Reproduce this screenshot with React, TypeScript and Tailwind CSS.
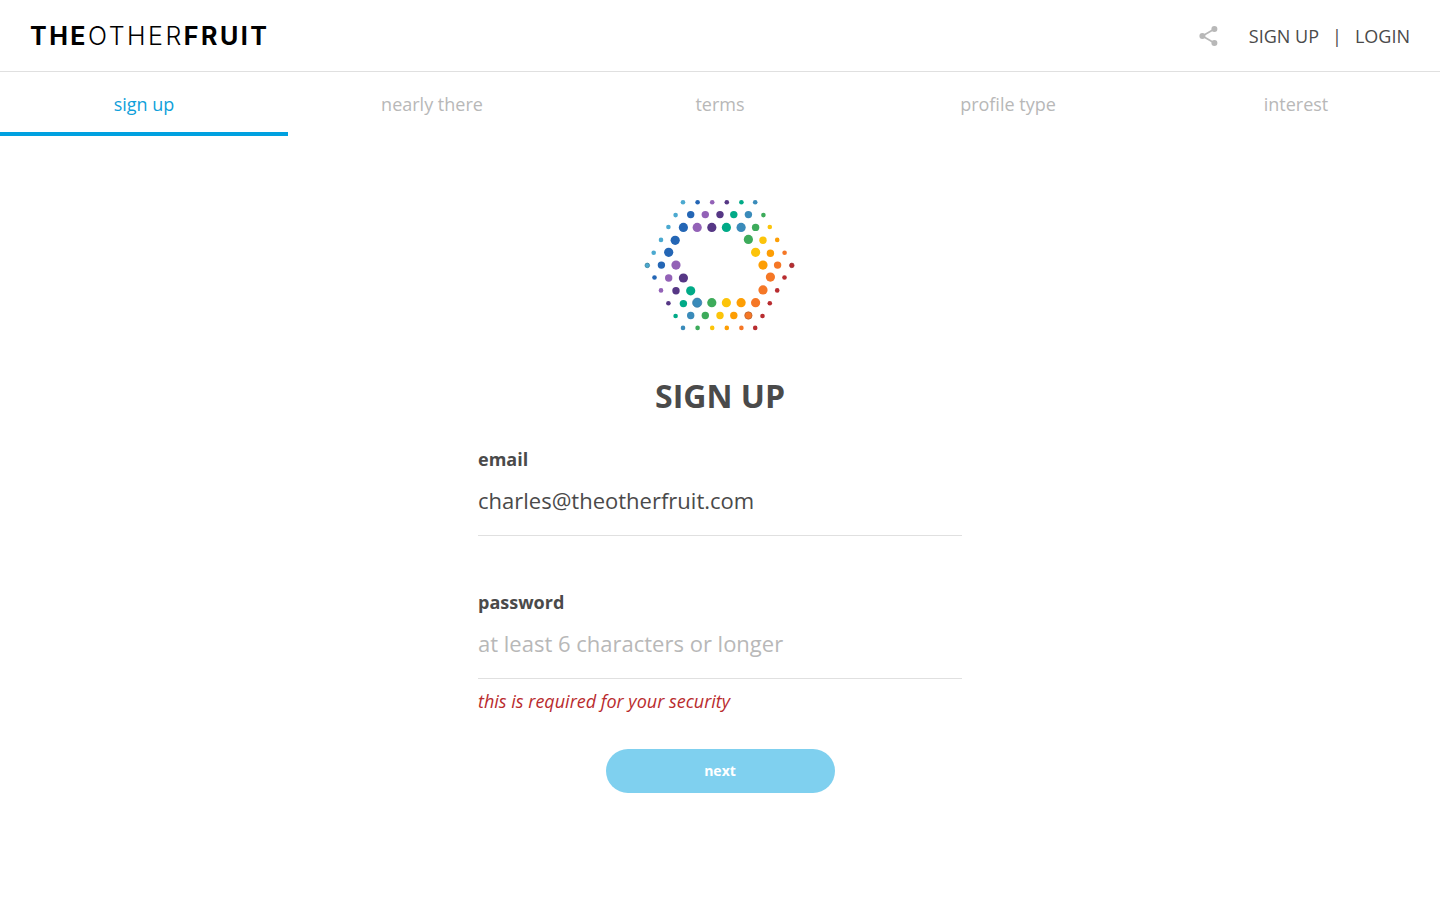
import React, { useState } from 'react';

const SKY = '#4ba9d0';
const BLUE = '#2466b5';
const VIOLET = '#9362b7';
const PLUM = '#563785';
const TEAL = '#00aa87';
const STEEL = '#3a8bba';
const GREEN = '#3dab5b';
const YELLOW = '#fcc40a';
const AMBER = '#fd9e04';
const ORANGE = '#f57726';
const RED = '#b82c30';

const S = 2.3;
const M = 3.7;
const L = 4.6;

type Dot = [x: number, y: number, r: number, fill: string, stroke?: string];

const DOTS: Dot[] = [
  [43, 10.2, S, SKY], [57.6, 10.2, S, BLUE], [72.2, 10.2, S, VIOLET], [86.8, 10.2, S, PLUM], [101.4, 10.2, S, TEAL], [115.2, 10.2, S, STEEL],
  [35.6, 23.1, S, SKY], [50.7, 22.6, M, BLUE], [65.3, 22.6, M, VIOLET], [80, 22.6, M, PLUM], [93.8, 22.6, M, TEAL], [108.4, 22.6, M, STEEL], [123.4, 23.1, S, GREEN],
  [28.4, 35, S, SKY], [43.4, 35.4, L, BLUE], [57.2, 35.4, L, VIOLET], [71.8, 35.4, L, PLUM], [86.4, 35.4, L, TEAL], [101.1, 35.4, L, STEEL], [115.6, 35.4, M, GREEN], [129.8, 35, S, YELLOW],
  [21, 47.9, S, SKY], [35.2, 48.3, L, BLUE], [108.4, 47.4, L, GREEN], [123, 48.3, M, YELLOW], [137.2, 47.9, S, AMBER],
  [13.7, 60.7, S, SKY], [28.7, 60.3, L, BLUE], [115.6, 60.3, L, YELLOW], [130.4, 61.2, M, AMBER], [144.6, 60.7, S, ORANGE],
  [7.3, 73.4, S, SKY, '#2f7b96'], [21.4, 73.1, M, BLUE], [36, 73.1, L, VIOLET], [123, 73.1, L, AMBER], [137.6, 73.1, M, ORANGE], [151.8, 73.4, S, RED, '#932d31'],
  [14.5, 85.5, S, BLUE], [28.7, 86, M, VIOLET], [43.4, 86, L, PLUM], [130.4, 85.1, L, ORANGE], [144.5, 85.5, S, RED],
  [21, 98.4, S, VIOLET], [36, 98.8, M, PLUM], [50.7, 98.8, L, TEAL], [123, 97.9, L, ORANGE], [137.2, 98.4, S, RED],
  [28.4, 111.2, S, PLUM], [43.4, 111.6, M, TEAL], [57.2, 110.7, L, STEEL, '#3377a0'], [71.8, 110.7, L, GREEN], [86.4, 110.7, L, YELLOW], [101.1, 110.7, L, AMBER], [115.6, 110.7, L, ORANGE], [129.8, 111.2, S, RED],
  [35.6, 124, S, TEAL], [50.7, 123.5, M, STEEL], [65.3, 123.5, M, GREEN], [80, 123.5, M, YELLOW], [93.8, 123.5, M, AMBER], [108.4, 123.5, M, ORANGE, '#b5602c'], [122.5, 124, S, RED],
  [43, 135.9, S, STEEL], [57.6, 135.9, S, GREEN], [72.2, 135.9, S, YELLOW], [86.8, 135.9, S, AMBER], [101.4, 135.9, S, ORANGE], [115.2, 135.9, S, RED],
];

const STEPS = ['sign up', 'nearly there', 'terms', 'profile type', 'interest'];

function DotEmblem() {
  return (
    <svg viewBox="0 0 160 146" className="h-[146px] w-40" aria-hidden="true">
      {DOTS.map(([x, y, r, fill, stroke]) => (
        <circle key={`${x}-${y}`} cx={x} cy={y} r={r} fill={fill} stroke={stroke} strokeWidth={stroke ? 0.7 : undefined} />
      ))}
    </svg>
  );
}

function ShareIcon() {
  return (
    <svg viewBox="0 0 20 20" className="size-5" fill="#b8b8b8" stroke="#b8b8b8" aria-hidden="true">
      <path d="M15.4 3 3.4 10l12 7" fill="none" strokeWidth="1.7" />
      <circle cx="15.4" cy="3" r="3" stroke="none" />
      <circle cx="3.4" cy="10" r="3" stroke="none" />
      <circle cx="15.4" cy="17" r="3" stroke="none" />
    </svg>
  );
}

const inputClass =
  'mt-2 h-[55px] w-full border-b border-[#e0e0e0] bg-transparent pb-4 text-[22px] text-[#4a4a4a] outline-none placeholder:text-[#b8b8b8] placeholder:opacity-100';

export default function App() {
  const [email, setEmail] = useState('charles@theotherfruit.com');
  const [password, setPassword] = useState('');

  return (
    <div className="min-h-screen bg-white font-['Open_Sans',sans-serif] text-lg text-[#4a4a4a]">
      <header className="flex h-[72px] items-center justify-between border-b border-[#e0e0e0] px-[30px]">
        <a href="#home" className="pt-0.5 font-['Inter',sans-serif] text-[25px] tracking-widest text-black">
          <span className="font-bold">THE</span>
          <span className="font-light">OTHER</span>
          <span className="font-bold">FRUIT</span>
        </a>
        <nav className="flex items-center">
          <button type="button" aria-label="Share" className="mr-[30px]">
            <ShareIcon />
          </button>
          <a href="#signup">SIGN UP</a>
          <span className="px-[13px]">|</span>
          <a href="#login">LOGIN</a>
        </nav>
      </header>

      <nav className="grid grid-cols-5">
        {STEPS.map((step, i) => (
          <a
            key={step}
            href={`#step-${i + 1}`}
            className={
              i === 0
                ? 'flex h-16 items-center justify-center border-b-4 border-[#00a1e0] pt-1 text-[#109fda]'
                : 'flex h-16 items-center justify-center border-b-4 border-transparent pt-1 text-[#b8b8b8]'
            }
          >
            {step}
          </a>
        ))}
      </nav>

      <main className="mx-auto flex max-w-[484px] flex-col items-center pt-14 pb-16">
        <DotEmblem />
        <h1 className="mt-8 text-[32px] leading-[51px] font-bold">SIGN UP</h1>

        <form className="mt-6 flex w-full flex-col items-center" onSubmit={(e) => e.preventDefault()}>
          <div className="w-full">
            <label htmlFor="email" className="block font-bold">email</label>
            <input id="email" type="email" value={email} onChange={(e) => setEmail(e.target.value)} className={inputClass} />
          </div>
          <div className="mt-[52px] w-full">
            <label htmlFor="password" className="block font-bold">password</label>
            <input
              id="password"
              type="password"
              placeholder="at least 6 characters or longer"
              value={password}
              onChange={(e) => setPassword(e.target.value)}
              aria-describedby="password-error"
              className={inputClass}
            />
            <p id="password-error" className="mt-2 text-[#b92b2e] italic">this is required for your security</p>
          </div>
          <button type="submit" className="mt-[34px] h-11 w-[229px] rounded-full bg-[#7fd0ef] text-sm font-bold text-white">
            next
          </button>
        </form>
      </main>
    </div>
  );
}
